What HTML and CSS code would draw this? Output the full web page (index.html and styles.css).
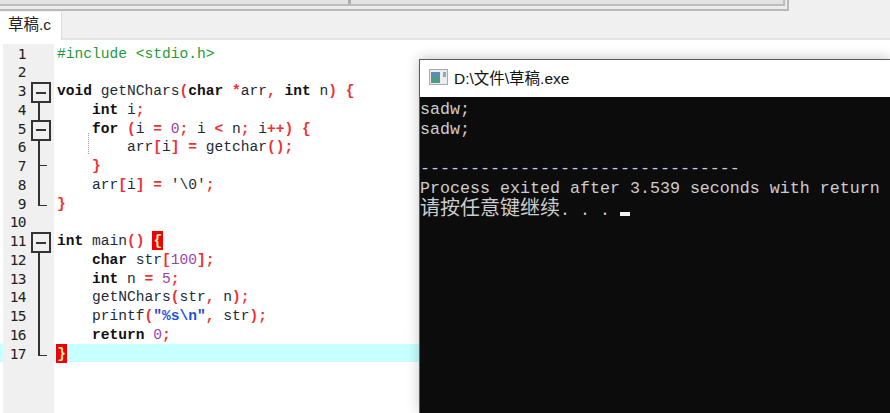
FILE: index.html
```html
<!DOCTYPE html>
<html lang="zh">
<head>
<meta charset="utf-8">
<title>草稿.c</title>
<link rel="stylesheet" href="styles.css">
</head>
<body>
<div class="ide">
  <div class="topbar">
    <div class="panel">
      <div class="panel-inner">
        <div class="panel-cell panel-left"></div>
        <div class="panel-cell panel-right"></div>
      </div>
    </div>
  </div>
  <div class="tabstrip"><div class="tab">草稿.c</div></div>
  <div class="editor">
    <div class="row"><span class="num">1</span><span class="fold"></span><span class="code"><span class="pp">#include &lt;stdio.h&gt;</span></span></div>
    <div class="row"><span class="num">2</span><span class="fold"></span><span class="code"></span></div>
    <div class="row"><span class="num">3</span><span class="fold box"></span><span class="code"><b>void</b> getNChars<i>(</i><b>char</b> <i>*</i>arr<i>,</i> <b>int</b> n<i>)</i> <i>{</i></span></div>
    <div class="row"><span class="num">4</span><span class="fold line"></span><span class="code">    <b>int</b> i<i>;</i></span></div>
    <div class="row"><span class="num">5</span><span class="fold line box"></span><span class="code">    <b>for</b> <i>(</i>i <i>=</i> <u>0</u><i>;</i> i <i>&lt;</i> n<i>;</i> i<i>++)</i> <i>{</i></span></div>
    <div class="row"><span class="num">6</span><span class="fold line"></span><span class="code"><span class="guide"></span>        arr<i>[</i>i<i>]</i> <i>=</i> getchar<i>();</i></span></div>
    <div class="row"><span class="num">7</span><span class="fold tee"></span><span class="code">    <i>}</i></span></div>
    <div class="row"><span class="num">8</span><span class="fold line"></span><span class="code">    arr<i>[</i>i<i>]</i> <i>=</i> '\0'<i>;</i></span></div>
    <div class="row"><span class="num">9</span><span class="fold end"></span><span class="code"><i>}</i></span></div>
    <div class="row"><span class="num">10</span><span class="fold"></span><span class="code"></span></div>
    <div class="row"><span class="num">11</span><span class="fold box"></span><span class="code"><b>int</b> main<i>()</i> <span class="match">{</span></span></div>
    <div class="row"><span class="num">12</span><span class="fold line"></span><span class="code">    <b>char</b> str<i>[</i><u>100</u><i>];</i></span></div>
    <div class="row"><span class="num">13</span><span class="fold line"></span><span class="code">    <b>int</b> n <i>=</i> <u>5</u><i>;</i></span></div>
    <div class="row"><span class="num">14</span><span class="fold line"></span><span class="code">    getNChars<i>(</i>str<i>,</i> n<i>);</i></span></div>
    <div class="row"><span class="num">15</span><span class="fold line"></span><span class="code">    printf<i>(</i><span class="str">"</span><span class="esc">%s\n</span><span class="str">"</span><i>,</i> str<i>);</i></span></div>
    <div class="row"><span class="num">16</span><span class="fold line"></span><span class="code">    <b>return</b> <u>0</u><i>;</i></span></div>
    <div class="row current"><span class="num">17</span><span class="fold end"></span><span class="code"><span class="match">}</span></span></div>
    <div class="rest"><span class="gutter-rest"></span></div>
  </div>
</div>
<div class="console">
  <div class="titlebar">
    <svg class="appicon" width="19" height="16" viewBox="0 0 19 16">
      <rect x="0.5" y="0.5" width="18" height="15" fill="#ececec" stroke="#a9a9a9"/>
      <rect x="2" y="3" width="9" height="11" fill="#4f9a86"/>
      <rect x="2" y="3" width="9" height="5" fill="#5a8fb0"/>
      <rect x="14" y="3" width="3" height="5" fill="#7fb0c8"/>
    </svg>
    <span class="title">D:\文件\草稿.exe</span>
  </div>
  <div class="viewport">
  <pre class="output">sadw;
sadw;

--------------------------------
Process exited after 3.539 seconds with return<span class="prompt"><span class="cjk">请按任意键继续</span>. . . <span class="cursor"></span></span></pre>
  </div>
</div>
</body>
</html>
```
FILE: styles.css
```css
* { box-sizing: border-box; }
html, body { margin: 0; height: 100%; overflow: hidden; background: #fff; }
body { width: 890px; height: 413px; position: relative; font-family: "Liberation Sans", "Noto Sans CJK SC", sans-serif; }
.ide { display: flex; flex-direction: column; height: 413px; }
.topbar { height: 11px; background: #f0f0f0; flex: none; }
.panel { width: 789px; height: 11px; border-right: 2px solid #b9b9b9; border-bottom: 2px solid #b9b9b9; background: #ececec; }
.panel-inner { width: 785px; height: 6px; display: flex; border-right: 2px solid #bcbcbc; border-bottom: 2px solid #bcbcbc; background: #e3e3e3; }
.panel-cell { height: 100%; }
.panel-left { width: 351px; border-right: 3px solid #aeaeae; }
.panel-right { flex: 1; }
.tabstrip { height: 29px; flex: none; background: #f0f0f0; border-bottom: 2px solid #e4e4e4; padding-top: 1px; }
.tab { width: 62px; height: 28px; background: #fff; border-right: 1px solid #dcdcdc; color: #222; font-size: 15.5px; line-height: 26px; padding-left: 8px; }
.editor { flex: 1; padding-top: 3.6px; display: flex; flex-direction: column; background: #fff; }
.row { height: 18.75px; display: flex; font: 14.58px/18.75px "Liberation Mono", monospace; color: #1c2b3a; }
.num { width: 23px; margin-left: 3px; flex: none; background: #f0f0f0; text-align: right; font: 14.5px/20px "DejaVu Sans Mono", monospace; color: #222; letter-spacing: -0.6px; }
.fold { width: 28px; background-color: #f0f0f0; background-repeat: no-repeat; position: relative; flex: none; }
.fold.line { background-image: linear-gradient(#333, #333); background-position: 12px 0; background-size: 2px 100%; }
.fold.tee { background-image: linear-gradient(#333, #333), linear-gradient(#333, #333); background-position: 12px 0, 12px 9px; background-size: 2px 100%, 9px 1px; }
.fold.end { background-image: linear-gradient(#333, #333), linear-gradient(#333, #333); background-position: 12px 0, 12px 11px; background-size: 2px 12px, 9px 1px; }
.fold.box::before { content: ""; position: absolute; left: 5px; top: 1px; width: 16px; height: 17px; border: 2px solid #333; background: linear-gradient(#333, #333) center / 10px 2px no-repeat #f0f0f0; z-index: 1; }
.code { white-space: pre; flex: 1; padding-left: 3px; position: relative; line-height: 20.5px; }
.code b { font-weight: 700; color: #111; }
.code i { font-style: normal; font-weight: 700; color: #f03030; }
.code u { text-decoration: none; color: #9b3fb0; }
.pp { color: #1f9a3a; }
.str { color: #2a3fe0; font-weight: 700; }
.esc { color: #2050e8; font-weight: 700; }
.match { display: inline-block; width: 11px; height: 19px; margin-left: -1px; margin-right: -1px; text-align: center; line-height: 20.5px; vertical-align: top; background: #f00000; color: #fff2b0; font-weight: 700; }
.guide { position: absolute; left: 34px; top: -4px; height: 21px; border-left: 1px dotted #9a9a9a; }
.current { background: #c8ffff; }
.rest { flex: 1; display: flex; }
.gutter-rest { width: 51px; margin-left: 3px; background: #f0f0f0; }
.console { position: absolute; left: 419px; top: 59px; width: 471px; height: 354px; background: #0c0c0c; border: 1px solid #5a5a5a; border-right: 0; border-bottom: 0; box-shadow: 0 -1px 12px rgba(0,0,0,.22); display: flex; flex-direction: column; }
.titlebar { height: 37px; flex: none; background: #fff; display: flex; align-items: center; padding: 0 0 3px 9px; gap: 6px; }
.appicon { flex: none; }
.title { font: 15.5px "Liberation Sans", "Noto Sans CJK SC", sans-serif; color: #111; white-space: nowrap; }
.viewport { flex: 1; min-height: 0; overflow: hidden; }
.output { margin: 0; padding: 3px 0 0 0; font: 16.67px/19.8px "Liberation Mono", monospace; color: #cccccc; white-space: pre; }
.prompt { display: block; padding-top: 2px; }
.cjk { font: 400 20px/0 "Noto Sans CJK SC", sans-serif; }
.cursor { display: inline-block; width: 10px; height: 4px; background: #f2f2f2; vertical-align: -1px; }
```
